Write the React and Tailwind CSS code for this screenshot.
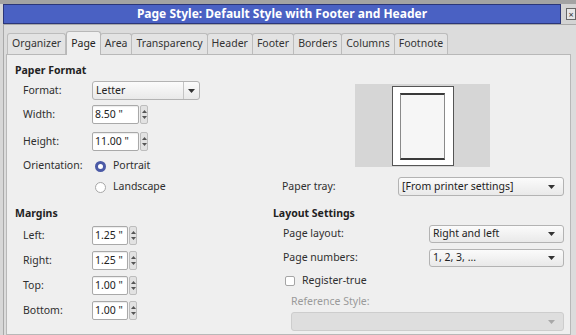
import React from 'react'

const Arrow = ({ color = '#333' }) => (
  <svg width="7" height="4" viewBox="0 0 7 4">
    <path d="M0 0 L7 0 L3.5 4 Z" fill={color} />
  </svg>
)

function Select({ value, className = '', disabled = false }) {
  return (
    <div
      className={`flex items-center justify-between rounded-[3px] border pl-[3px] pr-[8px] ${
        disabled
          ? 'border-[#cdcdcd] bg-[#dedede]'
          : 'border-[#b3b3b3] bg-gradient-to-b from-[#fbfbfb] to-[#e9e9e9] text-[#222]'
      } ${className}`}
    >
      <span>{value}</span>
      <Arrow color={disabled ? '#a8a8a8' : '#333'} />
    </div>
  )
}

function Spin({ value, boxW }) {
  return (
    <div className="flex h-[19px] items-stretch gap-[1px]">
      <div
        className={`${boxW} flex items-center rounded-[2px] border border-[#a9a9a9] bg-white pl-[2px] text-[#222] shadow-[inset_0_1px_1px_rgba(0,0,0,0.08)]`}
      >
        {value}
      </div>
      <div className="flex w-[8px] flex-col items-center justify-center gap-[3px] rounded-[2px] border border-[#bdbdbd] bg-[#e2e2e2]">
        <svg width="5" height="3" viewBox="0 0 5 3">
          <path d="M0 3 L5 3 L2.5 0 Z" fill="#555" />
        </svg>
        <svg width="5" height="3" viewBox="0 0 5 3">
          <path d="M0 0 L5 0 L2.5 3 Z" fill="#555" />
        </svg>
      </div>
    </div>
  )
}

const tabs = ['Organizer', 'Page', 'Area', 'Transparency', 'Header', 'Footer', 'Borders', 'Columns', 'Footnote']

export default function App() {
  return (
    <div
      className="relative flex h-[335px] w-[576px] flex-col overflow-hidden bg-[#d7d7d7] text-[10.5px] text-[#2e2e2e]"
      style={{ fontFamily: '"Noto Sans", "Open Sans", sans-serif' }}
    >
      {/* strip of the window behind */}
      <div className="h-[4px] bg-[#a3a3a3]" />

      {/* title bar */}
      <div className="flex h-[20px] items-center bg-[#d4d4d4]">
        <div className="ml-[3px] flex h-[20px] w-[558px] items-center justify-center border border-[#2b3678] bg-[#4a61c3] text-[12px] font-bold text-white">
          Page Style: Default Style with Footer and Header
        </div>
        <div className="ml-[5px] flex h-[12px] w-[10px] items-center justify-center border border-[#666] bg-[#e6e6e6] text-[9px] leading-none text-[#333]">
          ×
        </div>
      </div>

      {/* dialog body */}
      <div className="ml-[3px] flex flex-1 flex-col border-l border-t border-[#a9a9a9] bg-[#dcdcdc]">
        <div className="flex h-[29px] items-end pl-[4px]">
          {tabs.map((t) =>
            t === 'Page' ? (
              <div
                key={t}
                className="relative z-10 -mb-[1px] flex h-[24px] items-center rounded-t-[3px] border border-b-0 border-[#b8b8b8] bg-[#efefef] px-[4px] text-[#222]"
              >
                {t}
              </div>
            ) : (
              <div
                key={t}
                className="-ml-[1px] flex h-[21px] items-center rounded-t-[3px] border border-b-0 border-[#bcbcbc] bg-[#e3e3e3] px-[4px] text-[#333]"
              >
                {t}
              </div>
            )
          )}
        </div>

        {/* page panel */}
        <div className="ml-[2px] w-[565px] flex-1 border border-[#b8b8b8] bg-[#efefef] pl-[8px]">
          <div className="grid grid-cols-[258px_1fr]">
            {/* paper format */}
            <div className="flex flex-col">
              <div className="mt-[8px] h-[14px] font-bold leading-[14px] text-[#222]">Paper Format</div>
              <div className="mt-[4px] flex h-[19px] items-center">
                <span className="w-[77px] pl-[8px]">Format:</span>
                <div className="flex h-[19px] w-[108px] items-stretch rounded-[3px] border border-[#b3b3b3] bg-gradient-to-b from-[#fbfbfb] to-[#e9e9e9] text-[#222]">
                  <span className="flex flex-1 items-center pl-[3px]">Letter</span>
                  <span className="flex w-[16px] items-center justify-center border-l border-[#c4c4c4]">
                    <Arrow />
                  </span>
                </div>
              </div>
              <div className="mt-[5px] flex items-center">
                <span className="w-[77px] pl-[8px]">Width:</span>
                <Spin value={'8.50 "'} boxW="w-[47px]" />
              </div>
              <div className="mt-[8px] flex items-center">
                <span className="w-[77px] pl-[8px]">Height:</span>
                <Spin value={'11.00 "'} boxW="w-[47px]" />
              </div>
              <div className="mt-[6px] flex h-[18px] items-center">
                <span className="w-[77px] pl-[8px]">Orientation:</span>
                <span className="ml-[3px] h-[11px] w-[11px] rounded-full border-[3px] border-[#4b5aa6] bg-white" />
                <span className="ml-[7px]">Portrait</span>
              </div>
              <div className="mt-[3px] flex h-[18px] items-center">
                <span className="w-[77px]" />
                <span className="ml-[3px] h-[11px] w-[11px] rounded-full border border-[#a7a7a7] bg-white" />
                <span className="ml-[7px]">Landscape</span>
              </div>
            </div>

            {/* preview + tray */}
            <div className="flex flex-col">
              <div className="ml-[82px] mt-[29px] flex h-[83px] w-[135px] justify-center bg-[#d6d6d6]">
                <div className="mt-[2px] flex h-[80px] w-[62px] justify-center border border-[#555] bg-white">
                  <div className="mt-[6px] h-[67px] w-[45px] border-y-2 border-x border-[#3a3a3a] border-x-[#8a8a8a] bg-[#f6f6f6]" />
                </div>
              </div>
              <div className="mt-[10px] flex h-[19px] items-center">
                <span className="w-[125px] pl-[9px]">Paper tray:</span>
                <Select value="[From printer settings]" className="h-[19px] w-[166px]" />
              </div>
            </div>

            {/* margins */}
            <div className="flex flex-col">
              <div className="mt-[10px] h-[14px] font-bold leading-[14px] text-[#222]">Margins</div>
              {['Left:', 'Right:', 'Top:', 'Bottom:'].map((l, i) => (
                <div key={l} className="mt-[6px] flex items-center">
                  <span className="w-[77px] pl-[8px]">{l}</span>
                  <Spin value={i < 2 ? '1.25 "' : '1.00 "'} boxW="w-[36px]" />
                </div>
              ))}
            </div>

            {/* layout settings */}
            <div className="flex flex-col">
              <div className="mt-[10px] h-[14px] font-bold leading-[14px] text-[#222]">Layout Settings</div>
              <div className="mt-[5px] flex h-[18px] items-center">
                <span className="w-[156px] pl-[10px]">Page layout:</span>
                <Select value="Right and left" className="h-[18px] w-[135px]" />
              </div>
              <div className="mt-[6px] flex h-[18px] items-center">
                <span className="w-[156px] pl-[10px]">Page numbers:</span>
                <Select value="1, 2, 3, ..." className="h-[18px] w-[135px]" />
              </div>
              <div className="mt-[7px] flex h-[14px] items-center">
                <span className="ml-[12px] h-[10px] w-[10px] rounded-[2px] border border-[#a5a5a5] bg-white" />
                <span className="ml-[7px]">Register-true</span>
              </div>
              <div className="ml-[18px] mt-[6px] h-[14px] leading-[14px] text-[#9a9a9a]">Reference Style:</div>
              <Select value="" disabled className="ml-[18px] mt-[4px] h-[19px] w-[273px]" />
            </div>
          </div>
        </div>
      </div>
    </div>
  )
}
